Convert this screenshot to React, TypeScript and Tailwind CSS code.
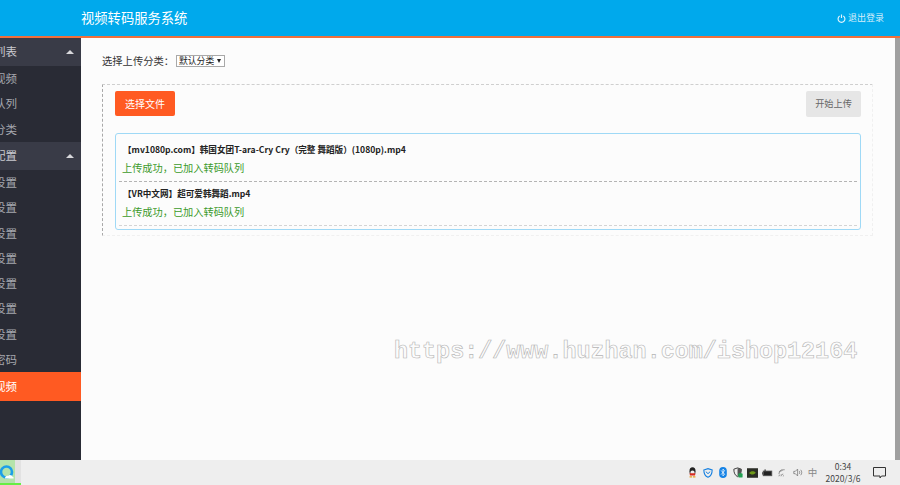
import React from "react";

const cjk = { fontFamily: '"Microsoft YaHei", "Noto Sans CJK SC", sans-serif' };

function GroupHead({ label }: { label: string }) {
  return (
    <div className="h-[28px] bg-[#393b47] flex items-center justify-between pr-[7px] text-[#c9cad0] text-[11.5px]">
      <span className="-ml-[29px] whitespace-nowrap">{label}</span>
      <span className="w-0 h-0 border-x-[4px] border-x-transparent border-b-[4px] border-b-[#d8d8dc]" />
    </div>
  );
}

function Item({ label }: { label: string }) {
  return (
    <div className="h-[25.3px] flex items-center text-[#a5a7ae] text-[11.5px]">
      <span className="-ml-[29px] whitespace-nowrap">{label}</span>
    </div>
  );
}

function FileRow({ name, last }: { name: string; last?: boolean }) {
  return (
    <div className={`mx-[3px] pl-[4px] border-b border-dashed ${last ? "h-[44px] border-[#d4d4d4]" : "h-[45px] border-[#b4b4b4]"}`}>
      <div className={`text-[8.6px] leading-[14px] font-bold text-[#222] whitespace-nowrap ${last ? "h-[20px] pt-[4px]" : "h-[21px] pt-[5px]"}`}>{name}</div>
      <div className="h-[19px] -ml-[1px] text-[10.2px] leading-[19px] text-[#3b9a2a] whitespace-nowrap">上传成功，已加入转码队列</div>
    </div>
  );
}

function Tray({ children }: { children: React.ReactNode }) {
  return <span className="w-[15px] flex items-center justify-center">{children}</span>;
}

function TrayIcons() {
  return (
    <div className="flex items-center">
      <Tray>
        <svg width="9" height="11" viewBox="0 0 10 13">
          <ellipse cx="5" cy="5" rx="3.600" ry="4.600" fill="#222" />
          <ellipse cx="5" cy="7" rx="2.600" ry="2.800" fill="#eee" />
          <path d="M1.500 7.500h7L8 10H2z" fill="#d92b20" />
          <path d="M1.500 11h3v1.400h-3zM5.500 11h3v1.400h-3z" fill="#e8a020" />
        </svg>
      </Tray>
      <Tray>
        <svg width="10" height="10" viewBox="0 0 12 12" fill="none">
          <path d="M1 2.400 6 .8l5 1.600c0 4.400-1.500 7.400-5 8.800C2.500 9.800 1 6.800 1 2.400z" stroke="#1780e0" strokeWidth="1.300" />
          <path d="M3.400 4.400 6 6.800l2.600-2.400" stroke="#1780e0" strokeWidth="1.200" />
        </svg>
      </Tray>
      <Tray>
        <svg width="8" height="11" viewBox="0 0 9 13">
          <rect width="9" height="13" rx="4.500" fill="#1683e6" />
          <path d="M2.200 4 6.400 8.600 4.500 10.500V2.500L6.400 4.400 2.200 9" stroke="#fff" strokeWidth=".9" fill="none" />
        </svg>
      </Tray>
      <Tray>
        <svg width="10" height="11" viewBox="0 0 12 13" fill="none">
          <path d="M1 2.500 5.500 1 10 2.500c0 4.500-1.400 7.500-4.500 9C2.400 10 1 7 1 2.500z" stroke="#333" strokeWidth="1.100" />
          <path d="M5.500 1v10.500C8.600 10 10 7 10 2.500z" fill="#555" />
          <rect x="6.500" y="7.500" width="5" height="5" rx="1" fill="#22a052" />
        </svg>
      </Tray>
      <Tray>
        <svg width="11" height="10" viewBox="0 0 15 13">
          <rect width="15" height="13" fill="#2b2d26" />
          <path d="M3 6.500c2-3 6-3.500 9-.5-2.500 3-6.500 3.500-9 .5z" fill="#6f9a18" />
        </svg>
      </Tray>
      <Tray>
        <svg width="11" height="8" viewBox="0 0 14 10">
          <rect x="1.500" y="2.500" width="11" height="6" fill="#222" stroke="#555" />
          <rect x="0" y="4" width="1.500" height="3" fill="#555" />
          <rect x="3" y="0.500" width="2" height="2" fill="#555" />
        </svg>
      </Tray>
      <Tray>
        <svg width="9" height="8" viewBox="0 0 12 11" fill="none" stroke="#777" strokeWidth="1">
          <path d="M1 10a2 2 0 0 1 2-2M1 7a5 5 0 0 1 5-5M4 10a3 3 0 0 1 3-3M7 10c0-.6.300-1 1-1M1 4a8 8 0 0 1 8-3" />
        </svg>
      </Tray>
      <Tray>
        <svg width="10" height="9" viewBox="0 0 13 11" fill="none" stroke="#777" strokeWidth="1">
          <path d="M1 4h2l3-3v9L3 7H1z" />
          <path d="M8 3.500c1 1.200 1 2.800 0 4M10 2c1.800 2 1.800 5 0 7" />
        </svg>
      </Tray>
      <Tray>
        <span className="text-[9.5px] text-[#888] leading-none">中</span>
      </Tray>
    </div>
  );
}

export default function App() {
  return (
    <div className="w-[900px] h-[485px] overflow-hidden flex flex-col relative bg-[#fcfcfc]" style={cjk}>
      <header className="h-[38px] shrink-0 bg-[#00a9ec] border-b-2 border-[#f0703c] flex items-center justify-between pl-[81px] pr-[16px]">
        <h1 className="text-[13.3px] text-white font-normal leading-none">视频转码服务系统</h1>
        <div className="flex items-center gap-[2px] text-[9px] text-[#d6eefa]">
          <svg width="9" height="9" viewBox="0 0 10 10" fill="none" stroke="#e0f3fc" strokeWidth="1.300">
            <path d="M3 2.200a3.800 3.800 0 1 0 4 0M5 .5v4" />
          </svg>
          <span>退出登录</span>
        </div>
      </header>

      <div className="flex-1 flex min-h-0">
        <aside className="w-[81px] shrink-0 bg-[#292b35] overflow-hidden">
          <GroupHead label="视频列表" />
          <Item label="所有视频" />
          <Item label="转码队列" />
          <Item label="视频分类" />
          <GroupHead label="系统配置" />
          <Item label="基本设置" />
          <Item label="转码设置" />
          <Item label="水印设置" />
          <Item label="上传设置" />
          <Item label="接口设置" />
          <Item label="播放设置" />
          <Item label="广告设置" />
          <Item label="修改密码" />
          <div className="h-[29px] bg-[#ff5a22] text-white text-[11.5px] flex items-center">
            <span className="-ml-[29px] whitespace-nowrap">上传视频</span>
          </div>
        </aside>

        <main className="flex-1 min-w-0 pl-[21px] pr-[22px]">
          <div className="h-[46px] flex items-center text-[10.3px] text-[#333]">
            <span className="w-[74px] whitespace-nowrap">选择上传分类：</span>
            <span className="w-[49px] h-[12px] border border-[#a9a9a9] bg-white flex items-center justify-between pl-[2px] pr-[3px] text-[8.8px] text-[#222] leading-none whitespace-nowrap">
              默认分类
              <span className="w-0 h-0 border-x-[2.500px] border-x-transparent border-t-[4px] border-t-[#222]" />
            </span>
          </div>
          <section className="h-[152px] border-t border-l border-dashed border-t-[#cfcfcf] border-l-[#a8a8a8] border-r border-b border-r-[#f0f0f0] border-b-[#f0f0f0] pt-[6px] pl-[12px] pr-[11px]">
            <div className="flex justify-between items-start">
              <button className="w-[60px] h-[25px] bg-[#ff5a22] text-white text-[10px] rounded-[2px]">选择文件</button>
              <button className="w-[55px] h-[26px] bg-[#e6e6e6] text-[#666] text-[9.2px] rounded-[2px]">开始上传</button>
            </div>
            <div className="mt-[16px] h-[97px] pt-[3px] border border-[#9fd9f6] rounded-[3px]">
              <FileRow name="【mv1080p.com】韩国女团T-ara-Cry Cry（完整 舞蹈版）(1080p).mp4" />
              <FileRow name="【VR中文网】超可爱韩舞蹈.mp4" last />
            </div>
          </section>
        </main>

        <div className="w-[5px] shrink-0 bg-[#a0a0a0]" />
      </div>

      <footer className="h-[25px] shrink-0 bg-[#eeeeee] flex items-stretch relative">
        <div className="w-[15px] h-[23px] bg-[#b4e3ab] flex items-center overflow-hidden">
          <svg width="15" height="18" viewBox="0 0 15 18" fill="none">
            <circle cx="6.500" cy="9" r="5.500" stroke="#1d9fe8" strokeWidth="2.600" />
            <path d="M5 15.500c0-2 1.500-3 3-2.600C9 11.300 12.500 11.800 12.500 14c1.300 0 1.800 1.500.7 1.500z" fill="#fff" />
          </svg>
        </div>
        <div className="w-[6px] h-[23px] bg-[#e2e2e2]" />
        <div className="absolute left-0 bottom-0 w-[21px] h-[2px] bg-[#66ee44]" />
        <div className="flex-1" />
        <div className="flex items-center">
          <TrayIcons />
          <div className="w-[44px] ml-[1px] text-center text-[8.5px] leading-[11.5px] text-[#444]">
            <div>0:34</div>
            <div>2020/3/6</div>
          </div>
          <svg width="13" height="12" viewBox="0 0 13 12" fill="none" stroke="#333" strokeWidth="1" className="ml-[8px] mr-[14px]">
            <path d="M.5.500h12v8.500H8.500L7 11V9H.5z" />
          </svg>
        </div>
      </footer>

      <div className="absolute left-[394px] top-[335px] text-[23.4px] font-bold leading-[34px] whitespace-nowrap text-[#fcfcfc] [-webkit-text-stroke:0.6px_#b4b4b4]" style={{ fontFamily: '"Liberation Mono", monospace' }}>
        https://www.huzhan.com/ishop12164
      </div>
    </div>
  );
}
